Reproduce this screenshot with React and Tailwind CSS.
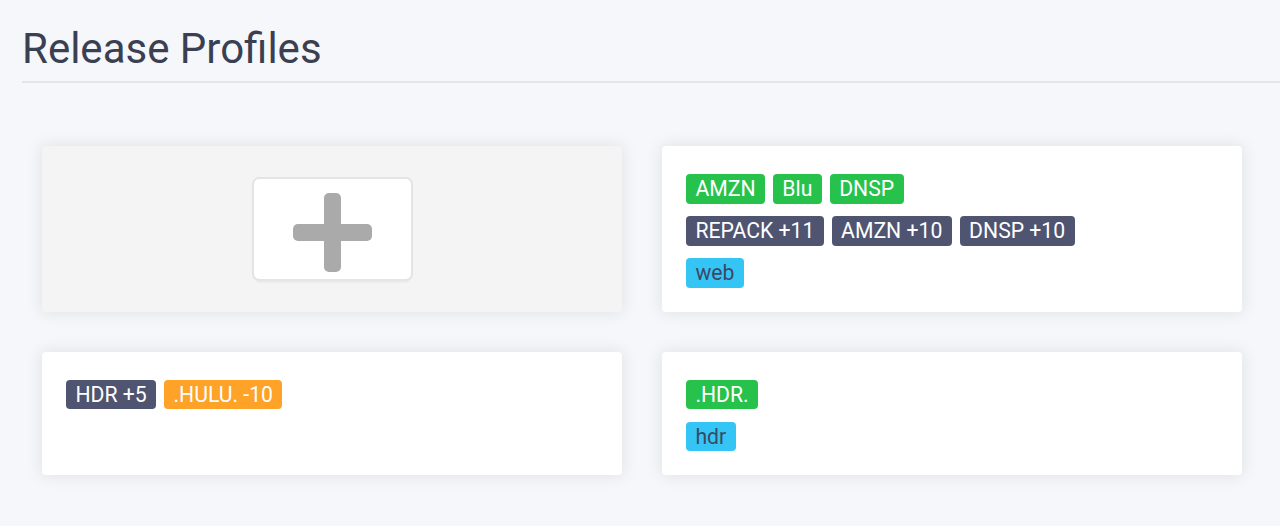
import React from "react";

function Tag({ kind, children }) {
  const cls =
    kind === "green"
      ? "bg-[#27c24c] text-white"
      : kind === "dark"
      ? "bg-[#4f5571] text-white"
      : kind === "blue"
      ? "bg-[#35c5f4] text-[#3b4866]"
      : "bg-[#ffa228] text-white";
  return (
    <span className={`${cls} inline-block rounded-[4px] px-[9.4px] text-[21.2px] leading-[29.6px] whitespace-nowrap`}>
      {children}
    </span>
  );
}

function Row({ children }) {
  return <div className="flex flex-wrap gap-x-[8px]">{children}</div>;
}

function Card({ rows }) {
  return (
    <div className="bg-white rounded-[4px] shadow-[0_0_16px_2px_rgba(0,0,0,0.08)] pt-[28px] pb-[24px] px-[24px] flex flex-col gap-[12.5px]">
      {rows.map((r, i) => (
        <Row key={i}>
          {r.map(([k, t], j) => (
            <Tag key={j} kind={k}>
              {t}
            </Tag>
          ))}
        </Row>
      ))}
    </div>
  );
}

export default function App() {
  return (
    <div className="min-h-[526px] bg-[#f5f7fa] pl-[22px] pt-[25px] font-['Roboto',_'Liberation_Sans',_sans-serif]">
      <h1 className="text-[42px] leading-[48px] text-[#3a3f51] font-normal pb-[8px] border-b-2 border-[#e4e5e8]">
        Release Profiles
      </h1>
      <div className="grid grid-cols-[580px_580px] gap-[40px] ml-[20px] mt-[63px]">
        <div className="bg-[#f4f4f4] rounded-[4px] shadow-[0_0_16px_2px_rgba(0,0,0,0.08)] flex items-center justify-center">
          <div className="w-[161px] h-[104px] bg-white border-2 border-[#e4e4e4] rounded-[7px] flex items-center justify-center pt-[8px] shadow-[0_6px_0_-4px_rgba(0,0,0,0.03)]">
            <svg width="79" height="79" viewBox="0 0 79 79">
              <rect x="31" y="0" width="17" height="79" rx="5" fill="#aaaaaa" />
              <rect x="0" y="31" width="79" height="17" rx="5" fill="#aaaaaa" />
            </svg>
          </div>
        </div>
        <Card
          rows={[
            [["green", "AMZN"], ["green", "Blu"], ["green", "DNSP"]],
            [["dark", "REPACK +11"], ["dark", "AMZN +10"], ["dark", "DNSP +10"]],
            [["blue", "web"]],
          ]}
        />
        <Card rows={[[["dark", "HDR +5"], ["orange", ".HULU. -10"]]]} />
        <Card rows={[[["green", ".HDR."]], [["blue", "hdr"]]]} />
      </div>
    </div>
  );
}
